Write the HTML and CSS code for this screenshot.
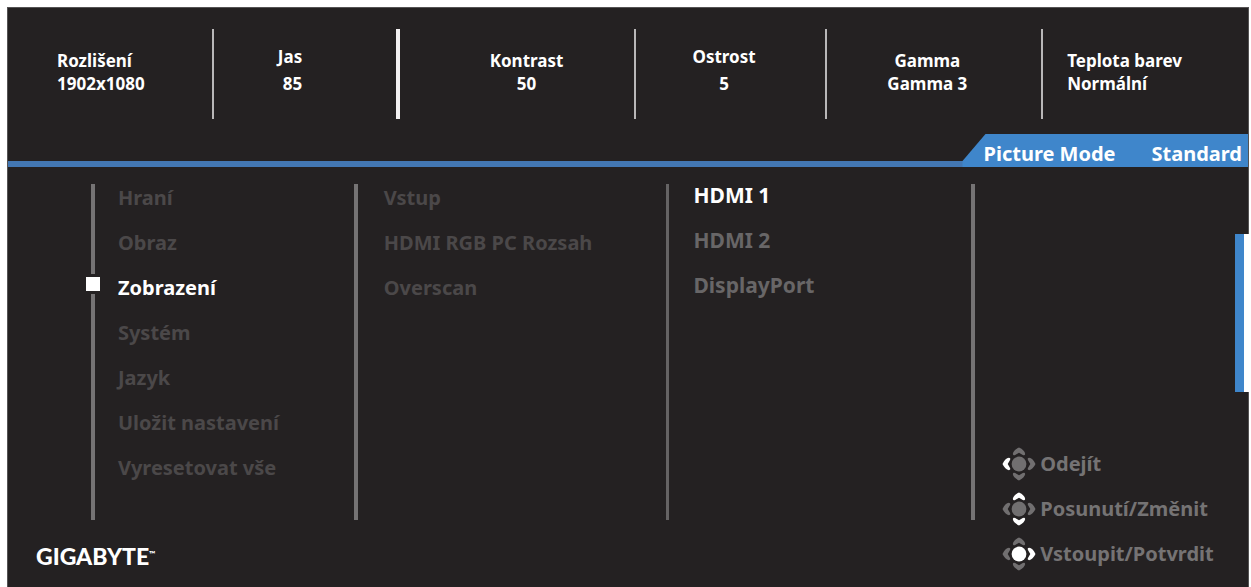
FILE: index.html
```html
<!DOCTYPE html>
<html lang="cs">
<head>
<meta charset="utf-8">
<title>Nastavení monitoru</title>
<link rel="stylesheet" href="styles.css">
</head>
<body>
<svg class="defs" aria-hidden="true">
  <defs>
    <path id="chevron" d="M-6.2 2.4 Q-5.6 -1.4 0 -4 Q5.6 -1.4 6.2 2.4 Q5.8 4.6 3.8 3.4 L0 1.2 L-3.8 3.4 Q-5.8 4.6 -6.2 2.4Z"/>
  </defs>
</svg>
<main class="osd">
  <header class="status">
    <dl class="readings">
      <div class="reading reading-resolution"><dt>Rozlišení</dt><dd>1902x1080</dd></div>
      <div class="reading reading-brightness spaced"><dt>Jas</dt><dd>85</dd></div>
      <div class="reading reading-contrast"><dt>Kontrast</dt><dd>50</dd></div>
      <div class="reading reading-sharpness spaced"><dt>Ostrost</dt><dd>5</dd></div>
      <div class="reading reading-gamma"><dt>Gamma</dt><dd>Gamma 3</dd></div>
      <div class="reading reading-temperature"><dt>Teplota barev</dt><dd>Normální</dd></div>
    </dl>
    <div class="mode"><span>Picture Mode</span><span>Standard</span></div>
  </header>
  <div class="content">
    <nav class="column column-main">
      <button class="item" type="button">Hraní</button>
      <button class="item" type="button">Obraz</button>
      <button class="item selected" type="button">Zobrazení</button>
      <button class="item" type="button">Systém</button>
      <button class="item" type="button">Jazyk</button>
      <button class="item" type="button">Uložit nastavení</button>
      <button class="item" type="button">Vyresetovat vše</button>
    </nav>
    <div class="column column-sub">
      <button class="item" type="button">Vstup</button>
      <button class="item" type="button">HDMI RGB PC Rozsah</button>
      <button class="item" type="button">Overscan</button>
    </div>
    <div class="column column-values">
      <button class="item selected" type="button">HDMI 1</button>
      <button class="item" type="button">HDMI 2</button>
      <button class="item" type="button">DisplayPort</button>
    </div>
    <div class="column column-empty"></div>
    <div class="brand">GIGABYTE<span class="trademark">™</span></div>
    <ul class="hints">
      <li class="hint">
        <svg class="pad" viewBox="-17 -17 34 34" aria-hidden="true">
          <circle r="7.4"/>
          <use href="#chevron" y="-12.5"/>
          <use href="#chevron" y="-12.5" transform="rotate(90)"/>
          <use href="#chevron" y="-12.5" transform="rotate(180)"/>
          <use class="lit" href="#chevron" y="-12.5" transform="rotate(270)"/>
        </svg>
        Odejít
      </li>
      <li class="hint">
        <svg class="pad" viewBox="-17 -17 34 34" aria-hidden="true">
          <circle r="7.4"/>
          <use class="lit" href="#chevron" y="-12.5"/>
          <use href="#chevron" y="-12.5" transform="rotate(90)"/>
          <use class="lit" href="#chevron" y="-12.5" transform="rotate(180)"/>
          <use href="#chevron" y="-12.5" transform="rotate(270)"/>
        </svg>
        Posunutí/Změnit
      </li>
      <li class="hint">
        <svg class="pad" viewBox="-17 -17 34 34" aria-hidden="true">
          <circle class="lit" r="7.4"/>
          <use href="#chevron" y="-12.5"/>
          <use class="lit" href="#chevron" y="-12.5" transform="rotate(90)"/>
          <use href="#chevron" y="-12.5" transform="rotate(180)"/>
          <use href="#chevron" y="-12.5" transform="rotate(270)"/>
        </svg>
        Vstoupit/Potvrdit
      </li>
    </ul>
  </div>
  <div class="edge-marker"></div>
</main>
</body>
</html>
```
FILE: styles.css
```css
* {
  box-sizing: border-box;
}

body {
  margin: 0;
  padding: 7px 2px 0 7px;
  min-height: 100vh;
  display: flex;
  background: #fff;
  font-family: "Noto Sans", sans-serif;
  font-weight: 700;
  color: #fff;
}

.defs {
  position: absolute;
  width: 0;
  height: 0;
}

.osd {
  position: relative;
  flex: 1;
  display: flex;
  flex-direction: column;
  background: #242122;
  border: 1px solid #555354;
  border-bottom: 0;
}

/* Status bar */

.status {
  padding-top: 21px;
  border-bottom: 6px solid #4377b3;
}

.readings {
  margin: 0;
  display: grid;
  grid-template-columns: 206fr 186fr 237fr 191fr 216fr 205fr;
}

.reading {
  height: 90px;
  padding-top: 20px;
  display: grid;
  align-content: start;
  justify-content: start;
  justify-items: center;
  border-right: 2px solid #b9b7b8;
  font-size: 17px;
  line-height: 23px;
}

.reading dd {
  margin: 0;
}

.spaced {
  padding-top: 16px;
  row-gap: 4px;
}

.reading-resolution {
  padding-left: 49px;
  justify-items: start;
}

.reading-brightness {
  padding-left: 64px;
  justify-items: end;
  border-right: 4px solid #f2f0f1;
}

.reading-contrast {
  padding-left: 90px;
}

.reading-sharpness {
  padding-left: 56px;
}

.reading-gamma {
  padding-left: 60px;
}

.reading-temperature {
  padding-left: 24px;
  justify-items: start;
  border-right: 0;
}

.mode {
  width: fit-content;
  margin: 15px 0 -6px auto;
  padding: 7px 6px 0 21px;
  display: flex;
  gap: 36px;
  background: #3f86cb;
  clip-path: polygon(23px 0, 100% 0, 100% 100%, 0 100%, 0 27px);
  font-size: 20px;
  line-height: 26px;
}

/* Menu columns */

.content {
  flex: 1;
  padding-top: 17px;
  display: grid;
  grid-template-columns: 83fr 263fr 313fr 305fr 277fr;
  grid-template-rows: 1fr 67px;
}

.column {
  grid-row: 1;
  display: flex;
  flex-direction: column;
  align-items: flex-start;
  border-left: 4px solid #757374;
}

.column-main {
  grid-column: 2;
  padding-left: 23px;
}

.column-sub {
  grid-column: 3;
  padding-left: 26px;
}

.column-values {
  grid-column: 4;
  padding-left: 24px;
  border-left: 3px solid #656364;
}

.column-empty {
  grid-column: 5;
}

.item {
  position: relative;
  height: 45px;
  margin: 0;
  padding: 0 0 17px;
  border: 0;
  background: none;
  color: #4b4849;
  font: inherit;
  font-size: 20px;
  line-height: 28px;
  white-space: nowrap;
}

.column-values .item {
  color: #686667;
  font-size: 21px;
  line-height: 22px;
  padding-bottom: 23px;
}

.column .item.selected {
  color: #fff;
}

.column-main .selected::before {
  content: "";
  position: absolute;
  left: -35px;
  top: 0;
  width: 14px;
  height: 14px;
  border: 3px solid #242122;
  box-sizing: content-box;
  background: #fff padding-box;
}

/* Footer */

.brand {
  grid-column: 1 / 4;
  grid-row: 2;
  padding: 20px 0 0 28px;
  font-family: Lato, sans-serif;
  font-weight: 900;
  font-size: 23px;
  line-height: 28px;
}

.trademark {
  font-size: 8px;
  vertical-align: 8px;
}

.hints {
  grid-column: 5;
  grid-row: 1 / 3;
  align-self: end;
  margin: 0;
  padding: 0 0 11px 31px;
  list-style: none;
  color: #757374;
  font-size: 20px;
}

.hint {
  height: 45px;
  display: flex;
  align-items: center;
  gap: 4px;
  white-space: nowrap;
}

.pad {
  flex: none;
  width: 34px;
  height: 34px;
  fill: #716f70;
}

.lit {
  fill: #fff;
}

.edge-marker {
  position: absolute;
  top: 39%;
  right: -3px;
  width: 16px;
  height: 158px;
  background: #3f86cb;
  border-right: 7px solid #fff;
}
```
